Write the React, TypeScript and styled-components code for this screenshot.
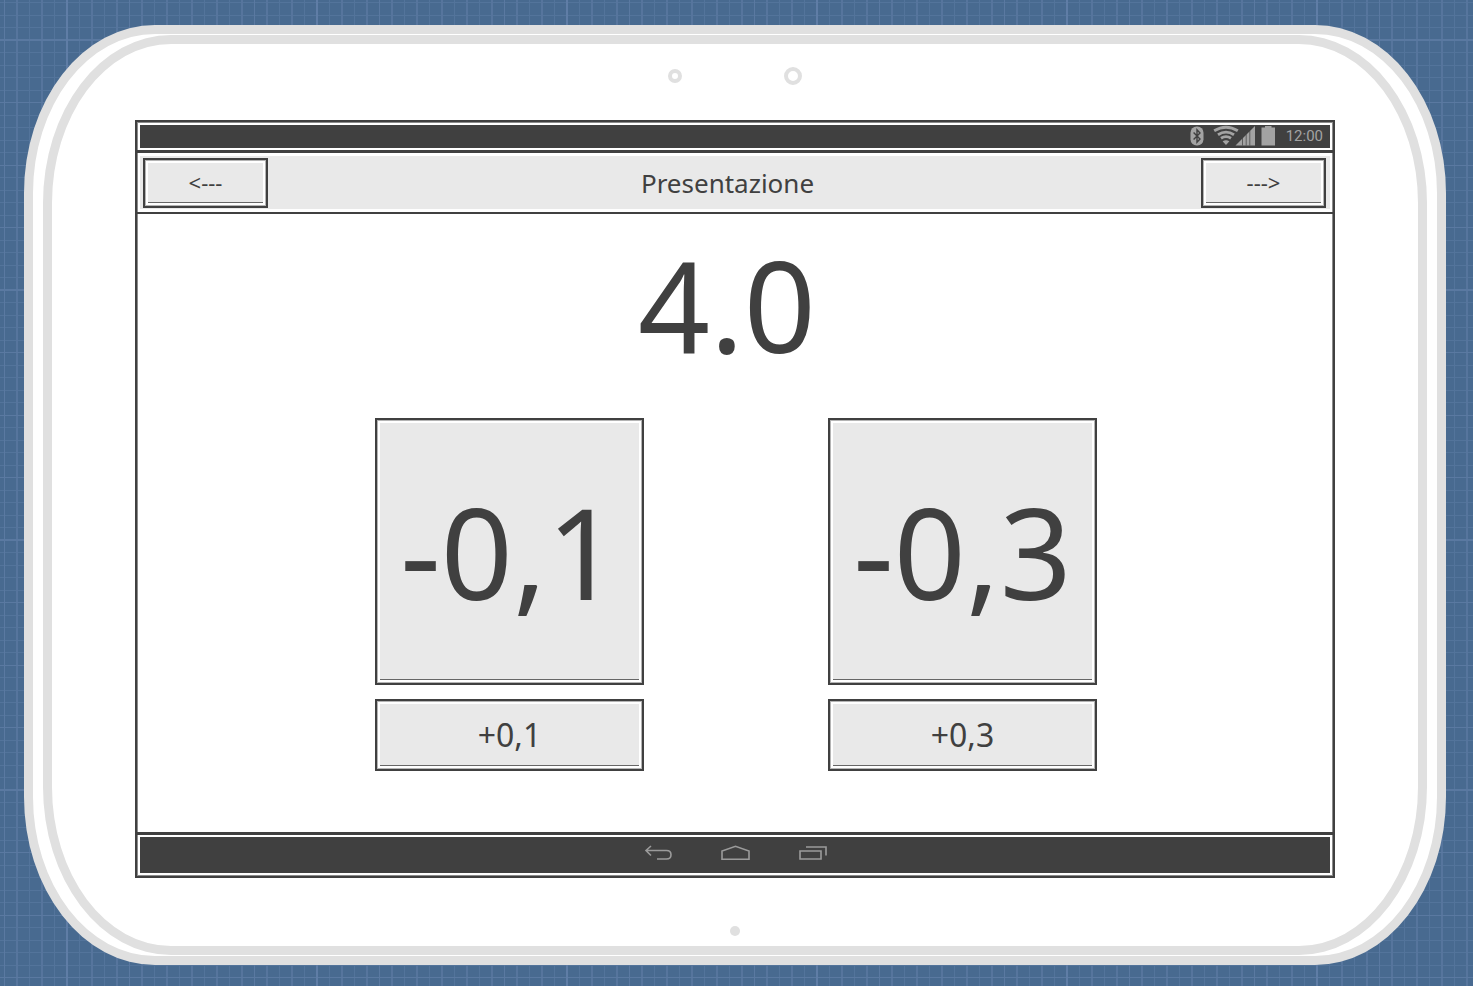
import React from "react";
import styled, { createGlobalStyle } from "styled-components";

const ink = "#404040";
const bezel = "#e0e0e0";
const face = "#e9e9e9";
const glyph = "#a3a3a3";
const soft = "#8c8c8c";

const GlobalStyle = createGlobalStyle`
  *, *::before, *::after { box-sizing: border-box; }
  body {
    margin: 0;
    color: ${ink};
    font-family: "Comic Sans MS", "Noto Sans", sans-serif;
  }
`;

/* Blueprint paper: bright 250px and 125px lines over a 25px grid. */
const Blueprint = styled.div`
  display: flex;
  min-height: 100vh;
  padding: 25px 27px 21px 24px;
  background-color: #486a90;
  background-image:
    linear-gradient(90deg, transparent 66px, #5f7da6 66px, #5f7da6 68px, transparent 68px),
    linear-gradient(transparent 40px, #5a79a1 40px, #5a79a1 41px, transparent 41px),
    linear-gradient(transparent 39px, #5a79a1 39px, #5a79a1 40px, transparent 40px),
    linear-gradient(90deg, transparent 4px, #5a79a1 4px, #5a79a1 5px, transparent 5px),
    linear-gradient(transparent 102px, #5a79a1 102px, #5a79a1 103px, transparent 103px),
    linear-gradient(90deg, transparent 4px, #53749b 4px, #53749b 5px, transparent 5px, transparent 16px, #56759d 16px, #56759d 18px, transparent 18px),
    linear-gradient(transparent 2px, #53749b 2px, #53749b 3px, transparent 3px, transparent 15px, #53749b 15px, #53749b 16px, transparent 16px);
  background-size: 250px 250px, 125px 125px, 250px 250px, 125px 125px, 125px 125px, 25px 25px, 25px 25px;
`;

const Shell = styled.div`
  display: flex;
  flex: 1;
  padding: 1px 10px;
  border: 9px solid ${bezel};
  border-radius: 131px / 168px;
  background: #fff;
`;

const Front = styled.div`
  display: flex;
  flex: 1;
  flex-direction: column;
  padding: 0 83px;
  border: 9px solid ${bezel};
  border-radius: 128px / 168px;
`;

const TopBezel = styled.div`
  display: flex;
  align-items: center;
  justify-content: center;
  gap: 102px;
  height: 76px;
  padding-bottom: 12px;
`;

const Lens = styled.span<{ $size: number }>`
  width: ${(p) => p.$size}px;
  height: ${(p) => p.$size}px;
  border: 4px solid ${bezel};
  border-radius: 50%;
`;

const BottomBezel = styled.div`
  display: flex;
  align-items: center;
  justify-content: center;
  height: 68px;
  padding-top: 38px;
`;

const Dot = styled.span`
  width: 10px;
  height: 10px;
  border-radius: 50%;
  background: ${bezel};
`;

const Screen = styled.div`
  display: flex;
  flex: 1;
  flex-direction: column;
  border: 2px solid ${ink};
  box-shadow: inset 1px 1px ${soft}, inset -1px -1px ${soft};
`;

const StatusBar = styled.div`
  display: flex;
  align-items: center;
  justify-content: flex-end;
  height: 23px;
  margin: 3px 3px 2px;
  padding: 0 7px 2px 0;
  background: ${ink};
  color: ${glyph};
  font: 15px/20px Roboto, sans-serif;
`;

const StatusIcons = styled.svg`
  display: block;
  margin-right: 11px;
`;

const Header = styled.header`
  display: flex;
  align-items: center;
  justify-content: space-between;
  height: 64px;
  padding: 0 7px 0 6px;
  border-top: 3px solid ${ink};
  border-bottom: 2px solid ${ink};
  background: linear-gradient(${face}, ${face}) 3px 3px / calc(100% - 6px) calc(100% - 6px) no-repeat;
`;

const Title = styled.h1`
  margin: 0;
  padding-right: 14px;
  font-size: 26px;
  font-weight: 400;
  line-height: 36px;
`;

const Main = styled.main`
  display: flex;
  flex: 1;
  flex-direction: column;
  align-items: center;
  padding: 20px 16px 60px;
`;

const Value = styled.output`
  padding-right: 16px;
  font-size: 126px;
  line-height: 140px;
`;

const Pads = styled.div`
  display: grid;
  grid-template-columns: 269px 269px;
  gap: 14px 184px;
  margin-top: 44px;
  padding-left: 2px;
`;

const sizes = {
  nav: { width: "125px", height: "50px", font: "22px" },
  small: { width: "100%", height: "72px", font: "32px" },
  big: { width: "100%", height: "267px", font: "126px" },
};

const Key = styled.button<{ $size: keyof typeof sizes }>`
  display: flex;
  width: ${(p) => sizes[p.$size].width};
  height: ${(p) => sizes[p.$size].height};
  padding: 3px;
  border: 2px solid ${ink};
  background: #fff;
  box-shadow: inset 0 0 0 1px #b4b4b4;
  color: inherit;
  font-family: inherit;
  font-size: ${(p) => sizes[p.$size].font};
  line-height: 1;
  cursor: pointer;
`;

const KeyFace = styled.span`
  display: flex;
  flex: 1;
  align-items: center;
  justify-content: center;
  align-self: stretch;
  border-bottom: 1px solid #666;
  background: ${face};
`;

const NavBar = styled.nav`
  display: flex;
  height: 44px;
  padding: 2px 3px 3px;
  border-top: 3px solid ${ink};
`;

const NavInner = styled.div`
  display: flex;
  flex: 1;
  align-items: flex-start;
  justify-content: center;
  gap: 48px;
  padding-top: 7px;
  background: ${ink};
`;

const NavButton = styled.button`
  display: block;
  width: 29px;
  height: 18px;
  padding: 0;
  border: 0;
  background: none;
  cursor: pointer;
`;

const NavIcon = styled.svg`
  display: block;
  fill: none;
  stroke: #9b9b9b;
  stroke-width: 1.6;
`;

type PadProps = { size: keyof typeof sizes; children: string; label?: string };

function PadKey({ size, children, label }: PadProps) {
  return (
    <Key type="button" $size={size} aria-label={label}>
      <KeyFace>{children}</KeyFace>
    </Key>
  );
}

export default function App() {
  return (
    <>
      <GlobalStyle />
      <Blueprint>
        <Shell>
          <Front>
            <TopBezel>
              <Lens $size={14} />
              <Lens $size={18} />
            </TopBezel>
            <Screen>
              <StatusBar>
                <StatusIcons width="86" height="22" viewBox="0 0 86 22" aria-hidden="true">
                  <rect x="1.5" y="1.5" width="13" height="19" rx="6.2" fill={glyph} />
                  <path d="M4.6 7.4 L11 14 L8 17.2 V4.8 L11 8 L4.6 14.6" fill="none" stroke={ink} strokeWidth="1.4" />
                  <g fill="none" stroke={glyph} strokeWidth="2.9">
                    <path d="M25.2 5.8 Q37 -1.4 48.8 5.8" />
                    <path d="M29 9.7 Q37 4.5 45 9.7" />
                    <path d="M32 13.2 Q37 10 42 13.2" />
                  </g>
                  <path d="M33.6 16.2 Q37 14.2 40.4 16.2 L37 20 Z" fill={glyph} />
                  <path d="M46.5 20.5 L66 1 V20.5 Z" fill={glyph} />
                  <path d="M53.5 13 V20.5 M57.2 9.3 V20.5 M60.8 5.7 V20.5" stroke={ink} strokeWidth="0.7" />
                  <path d="M72.5 2.5 H76 V1 H82.5 V2.5 H86 V20.5 H72.5 Z" fill={glyph} />
                </StatusIcons>
                <time>12:00</time>
              </StatusBar>
              <Header>
                <PadKey size="nav">{"<---"}</PadKey>
                <Title>Presentazione</Title>
                <PadKey size="nav">{"--->"}</PadKey>
              </Header>
              <Main>
                <Value>4.0</Value>
                <Pads>
                  <PadKey size="big">-0,1</PadKey>
                  <PadKey size="big">-0,3</PadKey>
                  <PadKey size="small">+0,1</PadKey>
                  <PadKey size="small">+0,3</PadKey>
                </Pads>
              </Main>
              <NavBar>
                <NavInner>
                  <NavButton type="button" aria-label="Back">
                    <NavIcon width="29" height="18" viewBox="0 0 29 18">
                      <path d="M7 2 L2 6.5 L7 11.5 M2 6.5 H22.5 Q27 6.5 27 10.7 Q27 15 22.5 15 H13" />
                    </NavIcon>
                  </NavButton>
                  <NavButton type="button" aria-label="Home">
                    <NavIcon width="29" height="18" viewBox="0 0 29 18">
                      <path d="M1 15.3 V7 L14.5 2.3 L28 7 V15.3 Z" />
                    </NavIcon>
                  </NavButton>
                  <NavButton type="button" aria-label="Recent apps">
                    <NavIcon width="29" height="18" viewBox="0 0 29 18">
                      <path d="M2 7 H23 V15 H2 Z M8 3 H28 V11.5" />
                    </NavIcon>
                  </NavButton>
                </NavInner>
              </NavBar>
            </Screen>
            <BottomBezel>
              <Dot />
            </BottomBezel>
          </Front>
        </Shell>
      </Blueprint>
    </>
  );
}
